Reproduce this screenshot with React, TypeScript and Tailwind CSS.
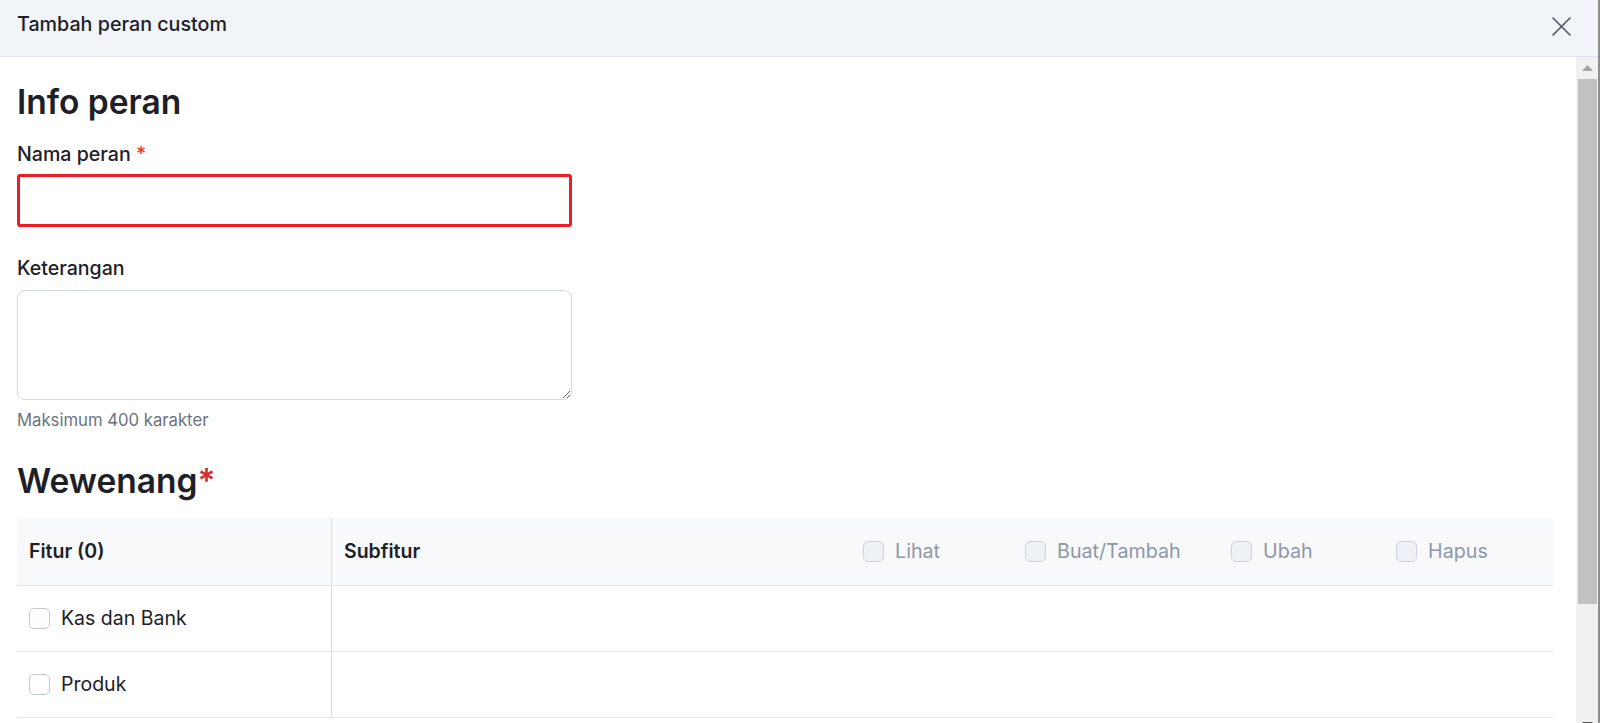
import { useState } from 'react';

const permissions = [
  { label: 'Lihat', width: 'w-[162px]' },
  { label: 'Buat/Tambah', width: 'w-[206px]' },
  { label: 'Ubah', width: 'w-[165px]' },
  { label: 'Hapus', width: 'flex-1' },
];

const features = ['Kas dan Bank', 'Produk'];

const App = () => {
  const [name, setName] = useState('');
  const [note, setNote] = useState('');

  return (
    <div className="h-[723px] overflow-hidden bg-white flex flex-col border-r-2 border-[#8e8e8e] font-['Inter','Noto_Sans',sans-serif] text-[#1d2127]">
      {/* Modal header */}
      <header className="h-[57px] shrink-0 flex items-center justify-between bg-[#f1f4f9] border-b border-[#dde1e7] pl-[17px] pr-[27px]">
        <h1 className="pb-[7px] text-[19.7px] font-medium">Tambah peran custom</h1>
        <button className="w-[19px] h-[19px] mb-[3px] flex items-center justify-center" aria-label="Tutup">
          <svg width="19" height="19" viewBox="0 0 19 19" fill="none" stroke="#4f5563" strokeWidth="1.6" strokeLinecap="round">
            <path d="M1 1l17 17M18 1L1 18" />
          </svg>
        </button>
      </header>

      {/* Body + scrollbar */}
      <div className="h-[679px] shrink-0 flex">
        <div className="flex-1 overflow-hidden pl-[17px] pr-[23px] pt-[25px]">
          <h2 className="text-[33.5px] leading-[40px] font-semibold">Info peran</h2>

          <label className="block mt-[20px] text-[19.6px] leading-[24px] font-medium">
            Nama peran <span className="text-[#e53935]">*</span>
          </label>
          <input
            value={name}
            onChange={(e) => setName(e.target.value)}
            className="block mt-[8px] w-[555px] h-[53px] border-[3px] border-[#ee1c25] rounded-[3px] px-3 text-[19px] outline-none"
          />

          <label className="block mt-[29px] text-[19.6px] leading-[24px] font-medium">Keterangan</label>
          <textarea
            value={note}
            onChange={(e) => setNote(e.target.value)}
            className="block mt-[10px] w-[555px] h-[110px] border border-[#d5dae1] rounded-[8px] px-3 py-2 text-[19px] outline-none"
          />
          <p className="mt-[10px] text-[16.7px] leading-[20px] text-[#6b7280]">Maksimum 400 karakter</p>

          <h2 className="mt-[31px] text-[33.5px] leading-[40px] font-semibold">
            Wewenang<span className="text-[#d32f2f]">*</span>
          </h2>

          {/* Permissions table */}
          <div className="mt-[17px]">
            <div className="flex h-[68px] bg-[#f8f9fb] border-b border-[#e2e6eb]">
              <div className="w-[315px] shrink-0 flex items-center pl-[12px] border-r border-[#d8dde5] text-[19.5px] font-semibold">
                Fitur (0)
              </div>
              <div className="flex-1 flex items-center">
                <div className="flex-1 pl-[12px] text-[19.5px] font-semibold">Subfitur</div>
                <div className="w-[690px] flex items-center">
                  {permissions.map((p) => (
                    <label key={p.label} className={`${p.width} flex items-center gap-[11px] text-[19.7px] text-[#8e97a8]`}>
                      <input type="checkbox" disabled className="appearance-none w-[21px] h-[21px] rounded-[5px] border border-[#cdd3dc] bg-[#eef1f5]" />
                      {p.label}
                    </label>
                  ))}
                </div>
              </div>
            </div>

            {features.map((f) => (
              <div key={f} className="flex h-[66px] border-b border-[#e2e6eb]">
                <label className="w-[315px] shrink-0 flex items-center gap-[11px] pl-[12px] border-r border-[#d8dde5] text-[19.5px]">
                  <input type="checkbox" className="appearance-none w-[21px] h-[21px] rounded-[5px] border border-[#c2c9d3] bg-white" />
                  {f}
                </label>
                <div className="flex-1" />
              </div>
            ))}
          </div>
        </div>

        {/* Scrollbar */}
        <div className="w-[22px] shrink-0 flex flex-col bg-[#f1f1f1]">
          <div className="h-[22px] flex items-center justify-center">
            <svg width="11" height="6" viewBox="0 0 11 6">
              <path d="M0 6h11L5.5 0z" fill="#a3a3a3" />
            </svg>
          </div>
          <div className="flex-1">
            <div className="h-[525px] ml-[2px] mr-[1px] bg-[#c1c1c1]" />
          </div>
          <div className="h-[22px] flex items-center justify-center">
            <svg width="11" height="6" viewBox="0 0 11 6">
              <path d="M0 0h11L5.5 6z" fill="#505050" />
            </svg>
          </div>
        </div>
      </div>
    </div>
  );
};

export default App;
